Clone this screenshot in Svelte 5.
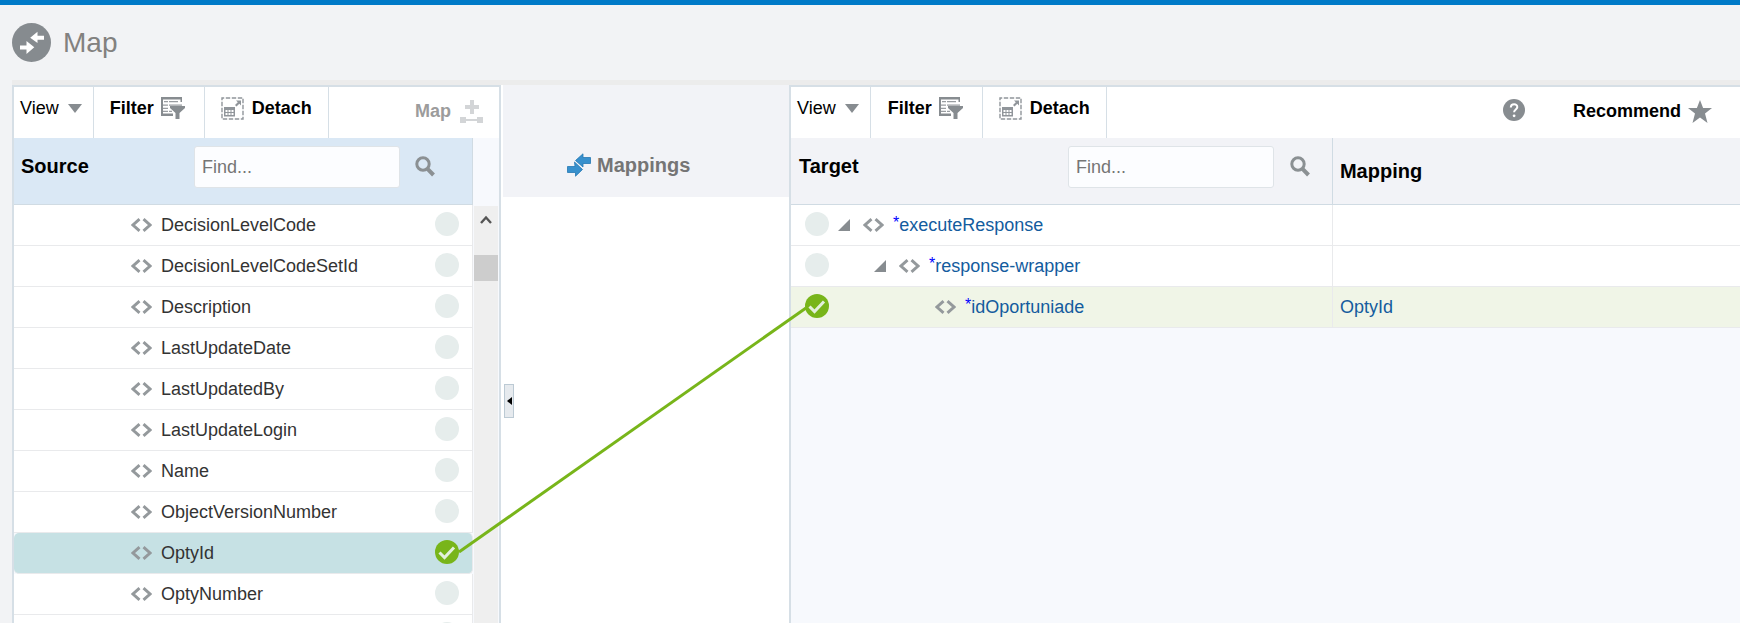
<script>
  import { onMount } from 'svelte';

  const sourceFields = [
    'DecisionLevelCode',
    'DecisionLevelCodeSetId',
    'Description',
    'LastUpdateDate',
    'LastUpdatedBy',
    'LastUpdateLogin',
    'Name',
    'ObjectVersionNumber',
    'OptyId',
    'OptyNumber',
    ''
  ];
  const targetNodes = [
    { name: 'executeResponse', level: 0, open: true, mapping: '' },
    { name: 'response-wrapper', level: 1, open: true, mapping: '' },
    { name: 'idOportuniade', level: 2, open: false, mapping: 'OptyId' }
  ];

  let page;
  let line = $state(null);

  // The connector runs between the two ticked nodes, wherever the layout puts them.
  function measure() {
    const a = page.querySelector('.source .dot.on').getBoundingClientRect();
    const b = page.querySelector('.target .dot.on').getBoundingClientRect();
    line = {
      x1: a.right,
      y1: a.top + a.height / 2,
      x2: b.left + 1,
      y2: b.top + b.height / 2 + 2
    };
  }

  onMount(measure);
</script>

<svelte:window onresize={measure} />

{#snippet dot(on)}
  <svg class="dot" class:on viewBox="0 0 24 24" aria-hidden="true">
    <circle cx="12" cy="12" r="12" fill={on ? '#78b51a' : '#e6edec'} />
    {#if on}
      <path d="M4.500 12.500l5 5L19 7.500" fill="none" stroke="#e3f0dc" stroke-width="3" />
    {/if}
  </svg>
{/snippet}

{#snippet code()}
  <svg class="code" viewBox="0 0 21 14" aria-hidden="true">
    <path d="M8.500 1.200L2 7l6.500 5.800M12.500 1.200L19 7l-6.500 5.800" fill="none" stroke="#94999c" stroke-width="2.900" />
  </svg>
{/snippet}

{#snippet tools()}
  <button class="tool view">View
    <svg width="14" height="9" viewBox="0 0 14 9" aria-hidden="true"><path d="M0 0h14L7 9z" fill="#878c90" /></svg>
  </button>
  <button class="tool filter">Filter
    <svg width="24" height="22" viewBox="0 0 24 22" aria-hidden="true" fill="#878c90">
      <path d="M0 0h21v2.500H0zM0 2.500h2V17H0zM0 16.500h12V19H0zM19.500 2.500H21V5h-1.500z" />
      <path d="M3 4h4v1.200H3zM8 4h9v1.200H8zM2 7.500h5v1.200H2zM8 7.500h13v1.200H8zM2 10.800h5V12H2zM2 13.800h5V15H2zM8 13.800h3V15H8z" opacity=".85" />
      <path d="M9 9h15v2l-5.500 5v6h-4v-6L9 11z" />
    </svg>
  </button>
  <button class="tool detach">
    <svg width="23" height="23" viewBox="0 0 23 23" aria-hidden="true">
      <rect x="1" y="1" width="21" height="21" fill="none" stroke="#90959a" stroke-width="1.400" stroke-dasharray="4.400 1.600" stroke-dashoffset="2.200" />
      <path d="M3 10h11v9.500H3z" fill="#90959a" />
      <path d="M4.500 13h2v2h-2zM7.500 13h2v2h-2zM10.500 13h2v2h-2zM4.500 16h2v2h-2zM7.500 16h2v2h-2zM10.500 16h2v2h-2z" fill="#fff" />
      <path d="M15 3.500h5V8.500l-1.700-1.700-2.800 2.800-1.500-1.500 2.800-2.800z" fill="#90959a" />
    </svg>
    Detach
  </button>
{/snippet}

{#snippet find(id, title)}
  <div class="find">
    <label for={id}>{title}</label>
    <input {id} type="text" placeholder="Find..." />
    <button aria-label="Search">
      <svg width="20" height="21" viewBox="0 0 20 21" fill="none" stroke="#8b9093" aria-hidden="true">
        <circle cx="8" cy="8" r="6.200" stroke-width="3" />
        <path d="M12.500 12.800l6 6.200" stroke-width="4" />
      </svg>
    </button>
  </div>
{/snippet}

<div class="page" bind:this={page}>
  <header>
    <svg width="39" height="39" viewBox="0 0 39 39" aria-hidden="true">
      <circle cx="19.500" cy="19.500" r="19.500" fill="#868b8f" />
      <path d="M32 12.700v4h-6.500V20l-7.300-5.300 7.300-5.900v3.900z" fill="#fff" />
      <path d="M8 22.400h6.500V18l7.800 6.300-7.800 6.700v-4.600H8z" fill="#fff" />
    </svg>
    <h1>Map</h1>
  </header>

  <main>
    <section class="panel source">
      <div class="toolbar">
        {@render tools()}
        <button class="action muted" disabled>Map
          <svg width="23" height="23" viewBox="0 0 23 23" fill="#d3d5d7" aria-hidden="true">
            <path d="M10 0h4v5h5v4h-5v5h-4V9H5V5h5zM0 17h6v6H0zM17 17h6v6h-6zM6 19h11v2H6z" />
          </svg>
        </button>
      </div>
      <div class="body">
        <table>
          <thead><tr><th>{@render find('find-source', 'Source')}</th></tr></thead>
          <tbody>
            {#each sourceFields as name}
              <tr class:selected={name === 'OptyId'}>
                <td>
                  <div class="node">{@render code()}<span>{name}</span>{@render dot(name === 'OptyId')}</div>
                </td>
              </tr>
            {/each}
          </tbody>
        </table>
        <div class="scroll">
          <button aria-label="Scroll up">
            <svg width="12" height="10" viewBox="0 0 12 10" fill="none" stroke="#555" stroke-width="2.400" aria-hidden="true"><path d="M1 8l5-5.500L11 8" /></svg>
          </button>
          <div class="thumb"></div>
        </div>
      </div>
    </section>

    <section class="mappings">
      <h2>
        <svg width="24" height="24" viewBox="0 0 24 24" fill="#3790cd" stroke="#2579b4" stroke-width="0.800" aria-hidden="true">
          <path d="M23.500 4.500v6H16v3.500L8.500 7.500 16 .8v3.700z" />
          <path d="M.5 13.500H8L7.500 9l8 7.500-7 6.700v-3.700h-8z" />
        </svg>
        Mappings
      </h2>
      <div class="canvas">
        <button class="splitter" aria-label="Collapse source">
          <svg width="5" height="8" viewBox="0 0 5 8" aria-hidden="true"><path d="M5 0v8L0 4z" /></svg>
        </button>
      </div>
    </section>

    <section class="panel target">
      <div class="toolbar">
        {@render tools()}
        <button class="help" aria-label="Help">
          <svg width="22" height="22" viewBox="0 0 22 22" aria-hidden="true">
            <circle cx="11" cy="11" r="11" fill="#878c90" />
            <path d="M7.800 8.500c0-4.500 6.800-4.200 6.500-.4-.2 2.300-3.200 2.500-3.200 5.200" fill="none" stroke="#fff" stroke-width="2" />
            <circle cx="11.100" cy="16.800" r="1.400" fill="#fff" />
          </svg>
        </button>
        <button class="action">Recommend
          <svg width="24" height="23" viewBox="0 0 24 23" fill="#878c90" aria-hidden="true">
            <path d="M12 0l3.100 8H24l-7 5.600L19.500 23 12 17.600 4.500 23 7 13.600 0 8h8.900z" />
          </svg>
        </button>
      </div>
      <div class="body">
        <table>
          <thead>
            <tr><th class="tree">{@render find('find-target', 'Target')}</th><th class="map">Mapping</th></tr>
          </thead>
          <tbody>
            {#each targetNodes as node}
              <tr class:mapped={node.mapping}>
                <td>
                  <div class="node">
                    {@render dot(!!node.mapping)}
                    <div class="branch" style="padding-left: {node.level * 36}px">
                      <svg class="twist" viewBox="0 0 12 12" aria-hidden="true">
                        {#if node.open}<path d="M12 0v12H0z" fill="#878c90" />{/if}
                      </svg>
                      {@render code()}
                      <a href="#{node.name}"><sup>*</sup>{node.name}</a>
                    </div>
                  </div>
                </td>
                <td class="map">{#if node.mapping}<a href="#{node.mapping}">{node.mapping}</a>{/if}</td>
              </tr>
            {/each}
          </tbody>
        </table>
      </div>
    </section>
  </main>

  {#if line}
    <svg class="wire" aria-hidden="true">
      <line x1={line.x1} y1={line.y1} x2={line.x2} y2={line.y2} stroke="#78b51a" stroke-width="3" />
    </svg>
  {/if}
</div>

<style>
  :global(body) {
    margin: 0;
  }
  .page {
    position: relative;
    box-sizing: border-box;
    height: 100vh;
    overflow: hidden;
    display: flex;
    flex-direction: column;
    padding-left: 12px;
    border-top: 5px solid #007ac8;
    background: #f2f3f5;
    color: #000;
    font: 18px/24px "Liberation Sans", Arial, sans-serif;
  }
  header {
    display: flex;
    align-items: center;
    gap: 12px;
    height: 75px;
  }
  h1 {
    margin: 0;
    font-size: 28px;
    font-weight: 400;
    color: #82817f;
  }
  main {
    flex: 1;
    min-height: 0;
    display: grid;
    grid-template-columns: 489fr 288fr 951fr;
    border-top: 5px solid #ececec;
  }
  button {
    margin: 0;
    padding: 0;
    border: 0;
    background: none;
    color: inherit;
    font: inherit;
  }
  svg {
    flex: none;
    display: block;
  }
  .panel {
    display: flex;
    flex-direction: column;
    min-width: 0;
    min-height: 0;
    border: 2px solid #d6dfe6;
    border-bottom: 0;
    background: #f7f9fd;
  }
  .target {
    border-right: 0;
  }
  .toolbar {
    display: flex;
    height: 51px;
    background: #fff;
  }
  .tool {
    display: flex;
    align-items: center;
    padding-bottom: 9px;
    border-right: 1px solid #d6dfe6;
    font-weight: 700;
  }
  .view {
    gap: 9px;
    padding-left: 6px;
    padding-right: 11px;
    font-weight: 400;
  }
  .filter {
    gap: 7px;
    padding-left: 16px;
    padding-right: 19px;
  }
  .target .filter {
    padding-left: 17px;
  }
  .detach {
    gap: 8px;
    padding-left: 16px;
    padding-right: 16px;
  }
  .action,
  .help {
    display: flex;
    align-items: center;
    gap: 7px;
    padding-bottom: 3px;
    font-weight: 700;
  }
  .help {
    margin-left: auto;
    margin-right: 48px;
    padding-bottom: 6px;
  }
  .action {
    margin-right: 28px;
  }
  .muted {
    gap: 9px;
    margin-left: auto;
    margin-right: 16px;
    color: #9c9c9c;
  }
  .body {
    flex: 1;
    min-height: 0;
    display: flex;
    align-items: flex-start;
    overflow: hidden;
  }
  table {
    flex: 1;
    min-width: 0;
    table-layout: fixed;
    border-spacing: 0;
  }
  th {
    box-sizing: border-box;
    height: 67px;
    padding: 0;
    border-bottom: 1px solid #d0dbe3;
    background: #f2f3f7;
    font-size: 20px;
    text-align: left;
  }
  .tree {
    width: 57%;
  }
  td {
    height: 40px;
    padding: 0;
    border-bottom: 1px solid #e9eaec;
    background: #fff;
  }
  .source th {
    border-right: 1px solid #d0dbe3;
    background: #dae8f5;
  }
  .source td {
    border-right: 1px solid #e9eaec;
    color: #333;
  }
  .map {
    padding-left: 7px;
    border-left: 1px solid #d0dbe3;
  }
  td.map {
    border-left-color: #e9eaec;
  }
  .find {
    display: flex;
    height: 50px;
    padding-right: 22px;
  }
  .source .find {
    padding-right: 37px;
  }
  .find label {
    flex: 1;
    padding-left: 8px;
    line-height: 40px;
  }
  .source label {
    padding-left: 7px;
  }
  .find input {
    box-sizing: border-box;
    width: 206px;
    height: 42px;
    min-width: 0;
    margin: 0 16px 0 0;
    padding: 0 7px;
    border: 1px solid #dfe4e8;
    border-radius: 3px;
    background: #fcfdff;
    font: inherit;
    font-size: 18px;
    font-weight: 400;
  }
  .source input {
    margin-right: 15px;
  }
  .find input::placeholder {
    color: #757575;
    opacity: 1;
  }
  .find button {
    height: 40px;
  }
  .node {
    display: flex;
    align-items: center;
    height: 40px;
  }
  .dot {
    width: 24px;
    height: 24px;
    margin-bottom: 2px;
  }
  .code {
    width: 21px;
    height: 14px;
    margin-right: 9px;
  }
  .source .node {
    padding-left: 117px;
    padding-right: 13px;
  }
  .source .node span {
    flex: 1;
  }
  .target .node {
    padding-left: 14px;
  }
  .branch {
    display: flex;
    align-items: center;
    margin-left: 9px;
  }
  .twist {
    width: 12px;
    height: 12px;
    margin-right: 13px;
  }
  a {
    color: #145c9e;
    text-decoration: none;
  }
  sup {
    color: #00f;
    line-height: 0;
    font-size: 16px;
    vertical-align: 3px;
  }
  .selected td {
    border-radius: 5px;
    background: #c6e1e4;
  }
  .mapped td {
    background: #f0f5e7;
  }
  .scroll {
    align-self: stretch;
    width: 24px;
    margin: 68px 1px 0;
    background: #efefef;
  }
  .scroll button {
    display: flex;
    justify-content: center;
    width: 100%;
    height: 49px;
    padding-top: 9px;
  }
  .thumb {
    height: 26px;
    background: #cdcdcd;
  }
  .mappings {
    display: flex;
    flex-direction: column;
    border-left: 2px solid #fff;
    background: #fff;
  }
  h2 {
    display: flex;
    align-items: center;
    gap: 6px;
    margin: 0;
    padding: 68px 0 20px 64px;
    background: #f2f3f7;
    font-size: 20px;
    color: #757575;
  }
  .canvas {
    flex: 1;
    display: flex;
    align-items: center;
  }
  .splitter {
    display: flex;
    align-items: center;
    justify-content: center;
    box-sizing: border-box;
    width: 10px;
    height: 34px;
    margin: 0 0 18px 1px;
    border: 1px solid #bccad4;
    background: #e6eaee;
  }
  .wire {
    position: absolute;
    top: -5px;
    left: 0;
    width: 100%;
    height: 100vh;
    pointer-events: none;
  }
</style>
